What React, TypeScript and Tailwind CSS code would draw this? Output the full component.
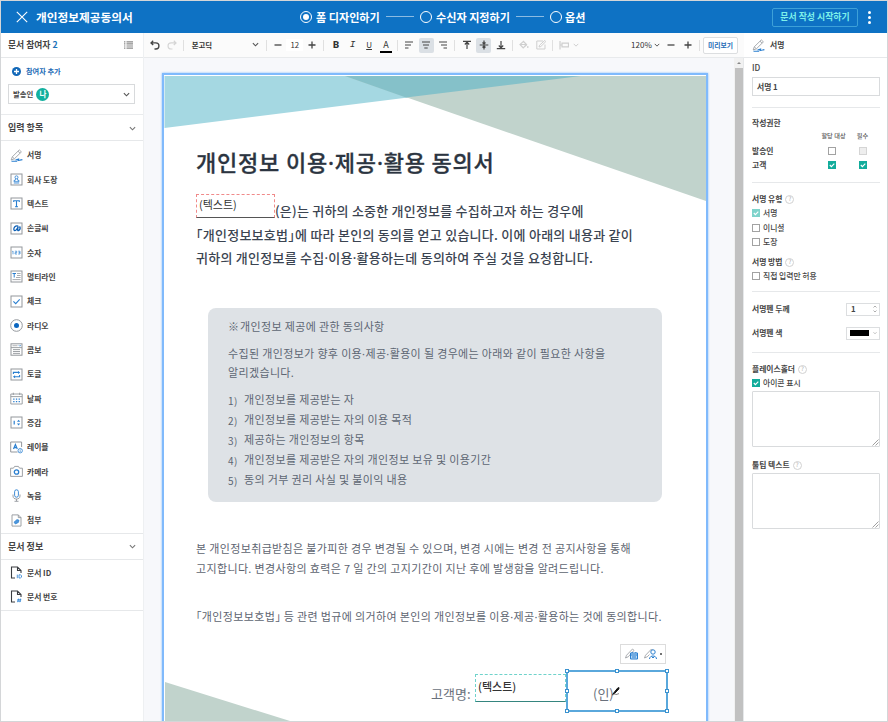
import React from "react";

const G = "#93979c";
const B = "#2a7fd0";

function Icon({ children, size = 13 }: { children: React.ReactNode; size?: number }) {
  return (
    <svg width={size} height={size} viewBox="0 0 13 13" fill="none" stroke={G} strokeWidth="1" className="shrink-0">
      {children}
    </svg>
  );
}

const Frame = () => <rect x="1" y="1" width="11" height="11" />;

const PenIcon = ({ size = 13 }: { size?: number }) => (
  <Icon size={size}>
    <path d="M1.2 11 L2.3 7.8 L9.3 0.9 L11.4 2.9 L4.4 9.8 Z M2.3 7.8 L4.4 9.8 M8 2.2 L10.1 4.2" strokeWidth="0.8" />
    <path d="M1.5 12.2 H7 M5.5 11 L8.5 10 L8 11.6 L12.4 10.6" stroke={B} strokeWidth="1.1" />
  </Icon>
);

const icons: Record<string, React.ReactNode> = {
  stamp: (
    <Icon>
      <Frame />
      <g stroke={B} strokeWidth="0.8">
        <circle cx="6.5" cy="4.3" r="1.5" />
        <path d="M5.6 5.6 L5.2 7.4 H4 V8.7 H9 V7.4 H7.8 L7.4 5.6 M3.8 10 H9.2" />
      </g>
    </Icon>
  ),
  text: (
    <Icon>
      <Frame />
      <path d="M3.7 5 V3.8 H9.3 V5 M6.5 3.8 V9.5 M5.2 9.6 H7.8" stroke={B} strokeWidth="1.1" />
    </Icon>
  ),
  hand: (
    <Icon>
      <Frame />
      <path d="M8.2 4.2 C5.5 3.2 3.4 5.5 3.9 7.8 C4.5 9.5 7 8.3 8.3 4.4 C7.3 7.6 7.4 9.3 8.8 8.4 C10 7.5 10.3 5.5 9.6 4.3" stroke="#0c5fb5" strokeWidth="1.3" />
    </Icon>
  ),
  number: (
    <Icon>
      <Frame />
      <path d="M3 5 V8.3 M2.4 5.4 L3 5 M4.9 5.2 H6.7 V6.6 H5.1 V8 H7 M8.2 5.2 H10 V8 H8.2 M8.6 6.6 H10" stroke={B} strokeWidth="0.7" />
    </Icon>
  ),
  multi: (
    <Icon>
      <Frame />
      <path d="M2.5 3.5 H6 M4.2 3.5 V7.5" stroke={B} />
      <path d="M7 3.5 H10.6 M7 5.5 H10.6 M6 7.5 H10.6 M2.5 9.6 H10.6" strokeWidth="0.8" />
    </Icon>
  ),
  check: (
    <Icon>
      <Frame />
      <path d="M3.4 6.3 L5.7 8.6 L9.7 4.3" stroke={B} strokeWidth="1.1" />
    </Icon>
  ),
  radio: (
    <Icon>
      <circle cx="6.5" cy="6.5" r="5.8" />
      <circle cx="6.5" cy="6.5" r="2.5" fill="#0b66c0" stroke="none" />
    </Icon>
  ),
  combo: (
    <Icon>
      <rect x="1" y="0.8" width="11" height="11.4" />
      <path d="M1 4.6 H12 M3 6.6 H10 M3 8.5 H10 M3 10.4 H10" strokeWidth="0.9" />
      <path d="M2.5 2.7 H7.5" strokeWidth="0.7" />
      <path d="M8.8 2.2 L9.8 3.2 L10.8 2.2" stroke={B} strokeWidth="0.8" />
    </Icon>
  ),
  toggle: (
    <Icon>
      <Frame />
      <path d="M3.4 6 V4.4 H8.8 M9.6 7 V8.7 H4.3" stroke={B} strokeWidth="1.1" />
      <path d="M8 2.9 L10.2 4.4 L8 5.9 Z M5.1 7.2 L2.9 8.7 L5.1 10.2 Z" fill={B} stroke="none" />
    </Icon>
  ),
  date: (
    <Icon>
      <path d="M0.8 2 H12.2 V12 H0.8 Z M0.8 4.6 H12.2 M3.3 0.7 V3 M9.7 0.7 V3" strokeWidth="0.9" />
      <path d="M3.2 7.2 H10 M3.2 9.6 H10" stroke={B} strokeWidth="1.2" strokeDasharray="1.3 1.4" />
    </Icon>
  ),
  step: (
    <Icon>
      <Frame />
      <path d="M4.2 4.8 V8.6" stroke={B} strokeWidth="1.2" />
      <path d="M7 5.8 L8.6 3.8 L10.2 5.8 Z M7 7.4 L8.6 9.4 L10.2 7.4 Z" fill={B} stroke="none" />
    </Icon>
  ),
  label: (
    <Icon>
      <path d="M7.5 11 H0.7 V1 H11.6 V6" />
      <path d="M3.5 8 L5.4 3.6 L7.3 8 M4.2 6.6 H6.6" stroke={B} strokeWidth="1.2" />
      <circle cx="10.2" cy="9.7" r="2.2" stroke={B} strokeWidth="0.8" />
      <path d="M10.2 9.2 V11 M10.2 8.1 V8.7" stroke={B} strokeWidth="0.7" />
    </Icon>
  ),
  camera: (
    <Icon>
      <path d="M0.6 3.2 H3.4 L4.6 1.4 H8.4 L9.6 3.2 H12.4 V11.4 H0.6 Z" strokeWidth="0.9" />
      <circle cx="6.5" cy="7" r="2.2" stroke={B} strokeWidth="1.3" />
    </Icon>
  ),
  mic: (
    <Icon>
      <rect x="4.6" y="0.8" width="3.8" height="7.4" rx="1.9" stroke={B} strokeWidth="0.9" />
      <path d="M3 5.5 V7 C3 9.2 4.6 10 6.5 10 C8.4 10 10 9.2 10 7 V5.5 M6.5 10 V12.2 M4.5 12.3 H8.5" strokeWidth="0.9" />
    </Icon>
  ),
  attach: (
    <Icon>
      <path d="M2 0.9 H8.3 L11 3.6 V12.1 H2 Z M8.3 0.9 V3.6 H11" strokeWidth="0.9" />
      <path d="M4 8.2 L7 5.6 L9 6.2 L8.4 8.4 L5.4 10 Z" fill="#4d97dc" stroke={B} strokeWidth="0.7" />
    </Icon>
  ),
  docId: (
    <Icon>
      <path d="M5 12 H1.5 V1 H7.5 L11 4.5 V7 M7.5 1 V4.5 H11" stroke="#3a3d41" strokeWidth="1.1" />
      <path d="M7.3 8.6 V12.2 M9 8.8 V12 H10.3 L11.5 11.2 V9.6 L10.3 8.8 Z" stroke={B} strokeWidth="0.8" />
    </Icon>
  ),
  docNo: (
    <Icon>
      <path d="M5 12 H1.5 V1 H7.5 L11 4.5 V7 M7.5 1 V4.5 H11" stroke="#3a3d41" strokeWidth="1.1" />
      <path d="M8.6 8.6 L7.8 12.2 M10.6 8.6 L9.8 12.2 M7.3 9.7 H11.3 M7 11.1 H11" stroke={B} strokeWidth="0.8" />
    </Icon>
  ),
};

const fields: [React.ReactNode, string][] = [
  [<PenIcon />, "서명"],
  [icons.stamp, "회사 도장"],
  [icons.text, "텍스트"],
  [icons.hand, "손글씨"],
  [icons.number, "숫자"],
  [icons.multi, "멀티라인"],
  [icons.check, "체크"],
  [icons.radio, "라디오"],
  [icons.combo, "콤보"],
  [icons.toggle, "토글"],
  [icons.date, "날짜"],
  [icons.step, "증감"],
  [icons.label, "레이블"],
  [icons.camera, "카메라"],
  [icons.mic, "녹음"],
  [icons.attach, "첨부"],
];

function Chevron({ color = "#555", w = 7 }: { color?: string; w?: number }) {
  return (
    <svg width={w} height={w} viewBox="0 0 8 8" fill="none" stroke={color} strokeWidth="1.3" className="shrink-0">
      <path d="M1 2.5 L4 5.5 L7 2.5" />
    </svg>
  );
}

/* Sets middle dots and corner brackets at their narrow widths. */
function Tight({ children }: { children: string }) {
  return (
    <>
      {children.split(/([·「」])/).map((part, i) => {
        if (part === "·") return <span key={i} className="font-['Noto_Sans'] leading-none">·</span>;
        if (part === "「" || part === "」") return <span key={i} className="[font-feature-settings:'halt']">{part}</span>;
        return part;
      })}
    </>
  );
}

function Header() {
  return (
    <header className="flex h-8 shrink-0 items-center bg-[#0e72c4] text-white">
      <svg width="12" height="12" viewBox="0 0 12 12" stroke="white" strokeWidth="1.1" className="ml-[15px]">
        <path d="M0.8 0.8 L11.2 11.2 M11.2 0.8 L0.8 11.2" />
      </svg>
      <h1 className="ml-2 w-[264px] text-[11.7px] font-bold">개인정보제공동의서</h1>
      <div className="flex w-[472px] items-center text-[11.1px] font-bold">
        <span className="flex size-3 items-center justify-center rounded-full border-[1.5px] border-white">
          <span className="size-1.5 rounded-full bg-white" />
        </span>
        <span className="ml-1 w-[65px]">폼 디자인하기</span>
        <span className="ml-[5px] h-px w-7 bg-[#8bbbe2]" />
        <span className="ml-1.5 size-3 rounded-full border-[1.5px] border-white" />
        <span className="ml-1 w-[75px]">수신자 지정하기</span>
        <span className="ml-[5px] h-px w-7 bg-[#8bbbe2]" />
        <span className="ml-1.5 size-3 rounded-full border-[1.5px] border-white" />
        <span className="ml-[3px]">옵션</span>
      </div>
      <button className="flex h-[19px] w-[86px] items-center justify-center rounded-[2px] border border-[#3da0d8] text-[8.9px] font-bold text-[#7df0ea]">
        문서 작성 시작하기
      </button>
      <div className="ml-[10px] flex flex-col gap-[2px]">
        <span className="size-[3px] rounded-full bg-white" />
        <span className="size-[3px] rounded-full bg-white" />
        <span className="size-[3px] rounded-full bg-white" />
      </div>
    </header>
  );
}

function SectionTitle({ children }: { children: React.ReactNode }) {
  return (
    <div className="flex h-[25px] items-center justify-between pt-px pr-[7px] pl-[7px] text-[9px] font-bold text-[#444]">
      <span>{children}</span>
      <Chevron color="#777" />
    </div>
  );
}

function LeftPanel() {
  return (
    <aside className="w-[143px] shrink-0 border-r border-[#eef0f2] bg-white text-[#444]">
      <div className="flex h-[25px] items-center justify-between border-b border-[#e6e8ea] pr-2.5 pl-[7px] text-[8.8px] font-bold">
        <span>
          문서 참여자 <span className="text-[#2072b8]">2</span>
        </span>
        <svg width="9" height="8" viewBox="0 0 9 8" stroke="#8a8a8a" strokeWidth="1.2">
          <path d="M0 0.8 H1.4 M2.5 0.8 H9 M0 2.9 H1.4 M2.5 2.9 H9 M0 5 H1.4 M2.5 5 H9 M0 7.1 H1.4 M2.5 7.1 H9" />
        </svg>
      </div>
      <div className="h-[57px] border-b border-[#e9ebed] pt-[7px]">
        <div className="flex h-3 items-center pl-[11px] text-[7.2px] font-bold text-[#1e6cb6]">
          <svg width="9" height="9" viewBox="0 0 9 9" className="mr-[5px]">
            <circle cx="4.5" cy="4.5" r="4.5" fill="#1268b8" />
            <path d="M4.5 2 V7 M2 4.5 H7" stroke="white" strokeWidth="1.3" />
          </svg>
          참여자 추가
        </div>
        <div className="mt-[7px] ml-[7px] flex h-5 w-[127px] items-center border border-[#d8dadc] pr-1 pl-1 text-[7.4px] font-bold">
          발송인
          <span className="ml-[3px] flex size-[13px] items-center justify-center rounded-full bg-[#12b09f] text-[7.5px] leading-none text-white">나</span>
          <span className="ml-auto">
            <Chevron />
          </span>
        </div>
      </div>
      <SectionTitle>입력 항목</SectionTitle>
      <div className="border-y border-[#e6e8ea] pt-[2px] pb-[0.4px]">
        {fields.map(([icon, name]) => (
          <div key={name} className="flex h-[24.35px] items-center pl-[9px] text-[7.8px] font-bold">
            {icon}
            <span className="ml-1">{name}</span>
          </div>
        ))}
      </div>
      <SectionTitle>문서 정보</SectionTitle>
      <div className="h-[52px] border-y border-[#e6e8ea] pt-[0.5px] text-[7.8px] font-bold">
        <div className="flex h-[24.4px] items-center pl-[9px]">
          {icons.docId}
          <span className="ml-1">문서 ID</span>
        </div>
        <div className="flex h-[24.4px] items-center pl-[9px]">
          {icons.docNo}
          <span className="ml-1">문서 번호</span>
        </div>
      </div>
    </aside>
  );
}

function Tool({ d, color = "#444", active = false, w = 1.2 }: { d: string; color?: string; active?: boolean; w?: number }) {
  return (
    <span className={active ? "mx-[1.3px] flex h-[15px] w-[14.5px] items-center justify-center rounded-[2px] bg-[#dbe0e5]" : "flex h-[15px] w-[17px] items-center justify-center"}>
      <svg width="10" height="10" viewBox="0 0 10 10" fill="none" stroke={color} strokeWidth={w}>
        <path d={d} />
      </svg>
    </span>
  );
}

const Sep = () => <span className="mx-[2.6px] h-[11px] w-px shrink-0 bg-[#e0e0e0]" />;

function Toolbar() {
  return (
    <div className="flex h-[25px] shrink-0 items-center border-b border-[#e8eaec] bg-[#fbfbfb] pl-[2.5px] text-[#333]">
      <Tool d="M3.2 0.8 L1 2.9 L3.2 5 M1 2.9 H5.8 C10 2.9 10 9 5.8 9 H4.5" w={1.3} />
      <Tool d="M6.8 0.8 L9 2.9 L6.8 5 M9 2.9 H4.2 C0 2.9 0 9 4.2 9 H5.5" color="#d5d5d5" />
      <Sep />
      <div className="ml-[3px] flex w-[73.5px] items-center justify-between pl-[2px] pr-[4px] text-[7.4px] font-bold">
        본고딕
        <Chevron />
      </div>
      <Sep />
      <Tool d="M1.5 5 H8.5" w={1.3} />
      <span className="w-[17px] bg-white text-center text-[7.8px]">12</span>
      <Tool d="M1.5 5 H8.5 M5 1.5 V8.5" w={1.3} />
      <Sep />
      <span className="ml-px w-[17px] text-center font-['Roboto'] text-[9.5px] font-black">B</span>
      <span className="w-[16px] text-center font-['Liberation_Mono'] text-[9.5px] italic">I</span>
      <span className="w-[17px] text-center text-[8px] underline">U</span>
      <span className="flex h-[15px] w-[17px] items-end justify-center">
        <span className="flex h-[14px] w-3 items-start justify-center border-b-2 border-black text-[9px] leading-[11px]">A</span>
      </span>
      <Sep />
      <Tool d="M1 2 H9 M1 5 H7 M1 8 H4.5" w={1} />
      <Tool d="M1 2 H9 M2 5 H8 M3.3 8 H6.7" active w={1} />
      <Tool d="M1 2 H9 M3 5 H9 M5.5 8 H9" w={1} />
      <Sep />
      <Tool d="M1 1.3 H9 M5 9 V2 M2.8 4.5 L5 2.2 L7.2 4.5" />
      <Tool d="M0.7 5 H9.3 M5 0.5 V9.5 M3.5 2.5 L5 4 L6.5 2.5 M3.5 7.5 L5 6 L6.5 7.5" active />
      <Tool d="M0.8 8.7 H9.2 M5 1 V8 M2.8 5.5 L5 7.8 L7.2 5.5" />
      <Sep />
      <Tool d="M4 1 L7.5 4.5 L4.2 7.8 L1 4.5 L4.2 1.6 M1 4.5 H7.5 V5 L4.2 7.8 M8.8 6 V8" color="#cfcfcf" />
      <Tool d="M7 1 H0.8 V9 H9 V4.5 M3 7 L3.6 5.2 L8.8 0.4 L9.8 1.6 L4.8 6.5 Z" color="#cfcfcf" w={1} />
      <Sep />
      <Tool d="M1 1 V9.5 M1 5 H3 M3 3.2 H9.5 V6.8 H3 Z" color="#cfcfcf" />
      <Chevron color="#cfcfcf" w={6} />
      <span className="ml-auto mr-[2px] text-[8px]">120%</span>
      <Chevron w={6} />
      <span className="ml-[3px]" />
      <Tool d="M1.5 5 H8.5" w={1.3} />
      <Tool d="M1.5 5 H8.5 M5 1.5 V8.5" w={1.3} />
      <Sep />
      <button className="mr-[6px] flex h-[17px] w-[35px] items-center justify-center rounded-[2px] border border-[#dcdee0] bg-white text-[6.8px] font-bold text-[#1e6cb6]">
        미리보기
      </button>
    </div>
  );
}

const Handle = ({ at }: { at: string }) => <span className={`absolute size-1 border border-[#3a92cf] bg-white ${at}`} />;

const consent = [
  "개인정보를 제공받는 자",
  "개인정보를 제공받는 자의 이용 목적",
  "제공하는 개인정보의 항목",
  "개인정보를 제공받은 자의 개인정보 보유 및 이용기간",
  "동의 거부 권리 사실 및 불이익 내용",
];

function Page() {
  return (
    <div className="relative ml-[18px] h-[700px] w-[546px] shrink-0 border-2 border-[#80bafc] bg-white whitespace-nowrap shadow-[0_0_2px_#80bafc]">
      <svg width="542" height="646" viewBox="0 0 542 646" className="absolute top-0 left-0">
        <path d="M0.5 1 H417 L0.5 53 Z" fill="#a5d8e2" />
        <path d="M181 1 H542 V126 Z" fill="#c1d3cc" />
        <path d="M181 1 H417 L242 22.5 Z" fill="#85c1c9" />
        <path d="M1 607 L126 646 H1 Z" fill="#c1d3cc" />
      </svg>
      <div className="relative pl-8">
        <h2 className="h-[102px] pt-[70px] text-[22px] leading-8 font-medium tracking-[0.8px] text-[#2b3440] [-webkit-text-stroke:0.3px_#2b3440]">
          <Tight>개인정보 이용·제공·활용 동의서</Tight>
        </h2>
        <div className="mt-[17px] flex h-[29px] items-start text-[13px] font-medium text-[#3b4451]">
          <span className="h-[24px] w-[79px] border border-dashed border-[#f08a8a] border-b-[#555] pl-[2px] text-[11px] leading-[19px] font-normal text-[#333] [border-bottom-style:solid]">(텍스트)</span>
          <span className="mt-[5px] leading-[24px] tracking-[0.22px]">(은)는 귀하의 소중한 개인정보를 수집하고자 하는 경우에</span>
        </div>
        <p className="text-[13px] leading-[23.3px] font-medium tracking-[0.25px] text-[#3b4451]">
          <Tight>「개인정보보호법」에 따라 본인의 동의를 얻고 있습니다. 이에 아래의 내용과 같이</Tight>
          <br />
          <Tight>귀하의 개인정보를 수집·이용·활용하는데 동의하여 주실 것을 요청합니다.</Tight>
        </p>
        <section className="mt-[38.4px] ml-3 h-[194px] w-[454px] rounded-[8px] bg-[#dee2e6] pt-[8px] pl-5 text-[11px] leading-5 tracking-[0.35px] text-[#5d6673]">
          <p>
            <span className="tracking-[-1.8px]">※</span> 개인정보 제공에 관한 동의사항
          </p>
          <p className="mt-2 leading-[19.5px]">
            <Tight>수집된 개인정보가 향후 이용·제공·활용이 될 경우에는 아래와 같이 필요한 사항을</Tight>
            <br />
            알리겠습니다.
          </p>
          <ol className="mt-[7.5px] leading-[19.9px]">
            {consent.map((line, i) => (
              <li key={line} className="flex h-[19.9px]">
                <span className="w-4 pt-px text-[10px]">{i + 1})</span>
                {line}
              </li>
            ))}
          </ol>
        </section>
        <p className="mt-[36px] text-[11px] leading-5 tracking-[0.35px] text-[#5d6470]">
          본 개인정보취급받침은 불가피한 경우 변경될 수 있으며, 변경 시에는 변경 전 공지사항을 통해
          <br />
          고지합니다. 변경사항의 효력은 7 일 간의 고지기간이 지난 후에 발생함을 알려드립니다.
        </p>
        <p className="mt-7 h-5 text-[11px] leading-5 tracking-[0.35px] text-[#5d6470]">
          <Tight>「개인정보보호법」 등 관련 법규에 의거하여 본인의 개인정보를 이용·제공·활용하는 것에 동의합니다.</Tight>
        </p>
        <div className="mt-[48px] ml-[235px] flex h-[29px] items-start text-[13px] text-[#6a717c]">
          <span className="mt-[8px] w-[44px] leading-6">고객명:</span>
          <span className="h-[28px] w-[91px] border border-dashed border-[#6fd3cb] border-b-[#35857f] pl-[2px] text-[11px] leading-[22px] font-medium text-[#333] [border-bottom-style:solid]">(텍스트)</span>
        </div>
      </div>
      <div className="absolute top-[569px] left-[456px] flex h-5 w-[46px] items-center gap-[5px] border border-[#dcdcdc] bg-white pl-1">
        <svg width="14" height="12" viewBox="0 0 14 12" fill="none">
          <path d="M0.5 10 L1.5 7.3 L7.5 1 L9 2.4 L3.2 8.8 Z" stroke={G} strokeWidth="0.8" />
          <path d="M5.5 5 H12.5 V11 H5.5 Z M5.5 7 H12.5 M7.2 4 V5 M10.8 4 V5 M7 9 H11" stroke={B} strokeWidth="1" fill="#b8d8f3" />
        </svg>
        <svg width="14" height="12" viewBox="0 0 14 12" fill="none">
          <path d="M0.5 10 L1.5 7.3 L7.5 1 L8.5 2 M3.2 8.8 L5.5 6.5 M0.5 10 L3.2 8.8" stroke={G} strokeWidth="0.8" />
          <circle cx="9" cy="4" r="2.2" stroke={B} />
          <path d="M5.5 11 C5.5 7 12.5 7 12.5 11 M7.5 8.5 L9 10 L10.5 8.5" stroke={B} />
        </svg>
        <span className="-ml-[3px] size-0.5 rounded-full bg-[#444]" />
      </div>
      <div className="absolute top-[595px] left-[402px] flex h-[42px] w-[102px] items-start border-2 border-[#5aa8dc] pt-[10px] pl-[25px] text-[13px] leading-6 text-[#6a717c]">
        (인)
        <svg width="11" height="10" viewBox="0 0 11 10" className="-ml-[3px] mt-[5px]">
          <path d="M1.5 7.5 L6.5 1.2 L8 0.6 L7.8 2 L3 7 Z" fill="#111" stroke="#111" />
          <path d="M1 8.4 L4 6.8 L5 7.6 L8 6.6" stroke="#888" fill="none" />
        </svg>
        <Handle at="-top-[3px] -left-[3px]" />
        <Handle at="-top-[3px] left-[47px]" />
        <Handle at="-top-[3px] -right-[3px]" />
        <Handle at="top-[17px] -left-[3px]" />
        <Handle at="top-[17px] -right-[3px]" />
        <Handle at="-bottom-[3px] -left-[3px]" />
        <Handle at="-bottom-[3px] left-[47px]" />
        <Handle at="-bottom-[3px] -right-[3px]" />
      </div>
    </div>
  );
}

function Check({ state = "off" }: { state?: "off" | "on" | "soft" | "disabled" }) {
  const look = {
    off: "border border-[#a2a2a2] bg-white",
    on: "bg-[#12ac9b]",
    soft: "bg-[#7fd3cb]",
    disabled: "border border-[#d5d5d5] bg-[#eeeeee]",
  }[state];
  return (
    <span className={`flex size-2 shrink-0 items-center justify-center ${look}`}>
      {(state === "on" || state === "soft") && (
        <svg width="6" height="6" viewBox="0 0 6 6" fill="none" stroke="white" strokeWidth="1.1">
          <path d="M0.8 3 L2.4 4.6 L5.3 1.6" />
        </svg>
      )}
    </span>
  );
}

const Help = () => <span className="ml-[3px] flex size-[9px] items-center justify-center rounded-full border border-[#d2d2d2] text-[6px] leading-none font-normal text-[#aaa]">?</span>;

const Rule = ({ gap }: { gap: string }) => <div className={`h-px bg-[#e6e8ea] ${gap}`} />;

function Area() {
  return (
    <div className="mt-px flex h-14 items-end justify-end rounded-[1px] border border-[#d9dbdd]">
      <svg width="7" height="7" viewBox="0 0 7 7" stroke="#888" strokeWidth="0.8">
        <path d="M0.5 6.5 L6.5 0.5 M3.5 6.5 L6.5 3.5" />
      </svg>
    </div>
  );
}

function RightPanel() {
  return (
    <aside className="w-[144px] shrink-0 bg-white text-[7.8px] font-medium text-[#444]">
      <div className="flex h-[25px] items-center border-b border-[#e6e8ea] pl-2 font-bold">
        <PenIcon />
        <span className="ml-[5px]">서명</span>
      </div>
      <div className="pr-2 pl-2">
        <div className="flex h-[19px] items-center text-[8.2px]">ID</div>
        <div className="flex h-[19px] items-center border border-[#d9dbdd] pl-1 font-bold">서명 1</div>
        <Rule gap="mt-[11px]" />
        <div className="mt-2 flex h-[14px] items-center font-bold">작성권한</div>
        <div className="grid h-[11px] grid-cols-[64px_32px_29px] items-center text-center text-[6.2px] text-[#555]">
          <span />
          <span className="pl-[3px]">할당 대상</span>
          <span>필수</span>
        </div>
        <div className="mt-[3px] grid h-[14px] grid-cols-[64px_32px_29px] items-center justify-items-center font-bold">
          <span className="justify-self-start">발송인</span>
          <Check />
          <Check state="disabled" />
        </div>
        <div className="grid h-[14px] grid-cols-[64px_32px_29px] items-center justify-items-center font-bold">
          <span className="justify-self-start">고객</span>
          <Check state="on" />
          <Check state="on" />
        </div>
        <Rule gap="mt-[10px]" />
        <div className="mt-[9px] flex h-[14px] items-center font-bold">서명 유형<Help /></div>
        <div className="flex h-[14px] items-center gap-[3px]"><Check state="soft" />서명</div>
        <div className="flex h-[15px] items-center gap-[3px]"><Check />이니셜</div>
        <div className="flex h-[14px] items-center gap-[3px]"><Check />도장</div>
        <div className="mt-[6px] flex h-[14px] items-center font-bold">서명 방법<Help /></div>
        <div className="flex h-[13px] items-center gap-[3px]"><Check />직접 입력만 허용</div>
        <Rule gap="mt-[9px]" />
        <div className="mt-[10px] flex h-[14px] items-center justify-between font-bold">
          서명펜 두께
          <span className="flex h-[13px] w-[34px] items-center justify-between border border-[#dcdee0] pr-[2px] pl-1">
            1
            <svg width="4" height="8" viewBox="0 0 4 8" fill="none" stroke="#999" strokeWidth="0.8">
              <path d="M0.5 2.5 L2 1 L3.5 2.5 M0.5 5.5 L2 7 L3.5 5.5" />
            </svg>
          </span>
        </div>
        <div className="mt-[10px] flex h-[14px] items-center justify-between font-bold">
          서명펜 색
          <span className="flex h-[13px] w-[34px] items-center justify-between border border-[#dcdee0] pr-[2px] pl-[3px]">
            <span className="h-[6px] w-[19px] bg-black" />
            <Chevron color="#999" w={4} />
          </span>
        </div>
        <Rule gap="mt-3" />
        <div className="mt-[9px] flex h-[14px] items-center font-bold">플레이스홀더<Help /></div>
        <div className="flex h-[14px] items-center gap-[3px]"><Check state="on" />아이콘 표시</div>
        <Area />
        <div className="mt-[11px] flex h-[14px] items-center font-bold">툴팁 텍스트<Help /></div>
        <Area />
      </div>
    </aside>
  );
}

export default function App() {
  return (
    <div className="flex h-[722px] w-[888px] flex-col overflow-hidden border border-[#d4d6d8] bg-white font-['Noto_Sans_CJK_KR',sans-serif]">
      <Header />
      <div className="flex min-h-0 flex-1">
        <LeftPanel />
        <main className="flex w-[600px] shrink-0 flex-col bg-[#f7f8fb]">
          <Toolbar />
          <div className="flex min-h-0 flex-1 justify-between overflow-hidden">
            <div className="pt-[15px]">
              <Page />
            </div>
            <div className="flex w-[10px] flex-col items-center border-r border-[#e6e8ea] bg-[#f1f1f1]">
              <svg width="8" height="10" viewBox="0 0 8 10">
                <path d="M2 6 L4 4 L6 6 Z" fill="#888" />
              </svg>
              <div className="w-2 flex-1 bg-[#c1c1c1]" />
            </div>
          </div>
        </main>
        <RightPanel />
      </div>
    </div>
  );
}
